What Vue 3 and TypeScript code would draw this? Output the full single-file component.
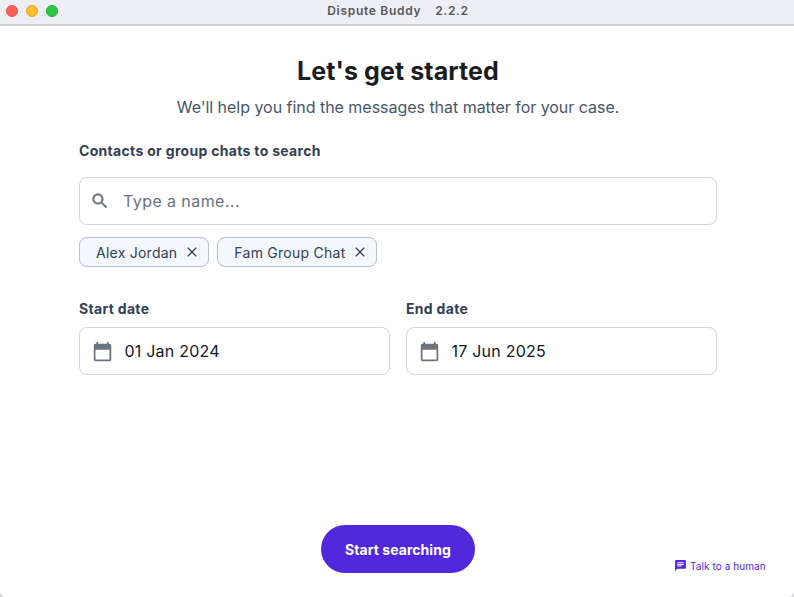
<script setup lang="ts">
const chips: string[] = ['Alex Jordan', 'Fam Group Chat']
const dates = [
  { label: 'Start date', value: '01 Jan 2024' },
  { label: 'End date', value: '17 Jun 2025' },
]
</script>

<template>
  <div class="window">
    <header class="titlebar">
      <div class="lights">
        <span class="light red"></span>
        <span class="light yellow"></span>
        <span class="light green"></span>
      </div>
      <span class="title">Dispute Buddy</span>
      <span class="title version">2.2.2</span>
    </header>
    <main class="content">
      <h1 class="heading">Let's get started</h1>
      <p class="sub">We'll help you find the messages that matter for your case.</p>
      <label class="label contacts">Contacts or group chats to search</label>
      <div class="field search">
        <svg class="search-icon" viewBox="0 0 24 24" width="20" height="20"><path fill="#6b7280" stroke="#6b7280" stroke-width="0.5" d="M15.5 14h-.79l-.28-.27A6.47 6.47 0 0 0 16 9.5 6.5 6.5 0 1 0 9.5 16c1.61 0 3.09-.59 4.23-1.57l.27.28v.79l5 4.99L20.49 19l-4.99-5zm-6 0C7.01 14 5 11.99 5 9.5S7.01 5 9.5 5 14 7.01 14 9.5 11.99 14 9.5 14z"/></svg>
        <span class="placeholder">Type a name...</span>
      </div>
      <div class="chips">
        <span v-for="chip in chips" :key="chip" class="chip">
          {{ chip }}
          <svg viewBox="0 0 24 24" width="16" height="16"><path fill="#374151" d="M19 6.41 17.59 5 12 10.59 6.41 5 5 6.41 10.59 12 5 17.59 6.41 19 12 13.41 17.59 19 19 17.59 13.41 12z"/></svg>
        </span>
      </div>
      <div class="dates">
        <div v-for="d in dates" :key="d.label" class="date">
          <label class="label">{{ d.label }}</label>
          <div class="field date-field">
            <svg viewBox="0 0 24 24" width="21" height="21"><path fill="#6b7280" d="M20 3h-1V1h-2v2H7V1H5v2H4c-1.1 0-2 .9-2 2v16c0 1.1.9 2 2 2h16c1.1 0 2-.9 2-2V5c0-1.1-.9-2-2-2zm0 18H4V10h16v11z"/></svg>
            <span class="date-value">{{ d.value }}</span>
          </div>
        </div>
      </div>
      <div class="spacer"></div>
      <button class="start">Start searching</button>
    </main>
    <a class="talk">
      <svg viewBox="0 0 24 24" width="13" height="13"><path fill="#5128dc" d="M20 2H4c-1.1 0-2 .9-2 2v18l4-4h14c1.1 0 2-.9 2-2V4c0-1.1-.9-2-2-2zM6 9h12v2H6V9zm8 5H6v-2h8v2zm4-6H6V6h12v2z"/></svg>
      Talk to a human
    </a>
  </div>
</template>

<style>
html, body { margin: 0; background: #d4d4da; overflow: hidden; }
</style>

<style scoped>
.window {
  position: relative;
  width: 794px;
  height: 597px;
  display: flex;
  flex-direction: column;
  font-family: Inter, "Liberation Sans", sans-serif;
  background: #fff;
  overflow: hidden;
  box-sizing: border-box;
  border-radius: 0 0 6px 6px;
}
.titlebar {
  position: relative;
  height: 26px;
  flex: none;
  box-sizing: border-box;
  padding-left: 2px;
  background: #eeeef5;
  border-bottom: 2px solid #cfcfd4;
  display: flex;
  align-items: center;
  justify-content: center;
  gap: 14px;
}
.lights { position: absolute; left: 6px; top: 5px; display: flex; gap: 8px; }
.light { width: 12px; height: 12px; border-radius: 50%; box-sizing: border-box; }
.red { background: #ff5f57; border: 1px solid #e5534b; }
.yellow { background: #febc2e; border: 1px solid #e0a128; }
.green { background: #28c840; border: 1px solid #1fae35; }
.title { font-size: 12px; font-weight: 600; color: #55555c; letter-spacing: 0.7px; margin-top: -4px; }
.content {
  flex: 1;
  display: flex;
  flex-direction: column;
  padding: 0 77px 24px 79px;
}
.heading {
  margin: 27px 0 0;
  height: 36px;
  line-height: 36px;
  text-align: center;
  font-size: 25px;
  font-weight: 700;
  letter-spacing: 0.1px;
  color: #1a1c1e;
}
.sub {
  margin: 5px 0 0;
  line-height: 26px;
  text-align: center;
  font-size: 16px;
  letter-spacing: -0.03px;
  color: #475569;
}
.label { display: block; font-size: 14px; font-weight: 700; letter-spacing: 0.31px; line-height: 20px; color: #334155; }
.contacts { margin-top: 21px; }
.field {
  display: flex;
  align-items: center;
  height: 48px;
  box-sizing: border-box;
  border: 1px solid #d1d5db;
  border-radius: 8px;
  background: #fff;
}
.search { margin-top: 16px; padding-left: 10px; }
.search-icon { flex: none; }
.placeholder { margin-left: 13px; font-size: 16px; color: #6b7280; letter-spacing: 0.42px; }
.chips { display: flex; gap: 8px; margin-top: 12px; }
.chip {
  display: flex;
  align-items: center;
  gap: 7px;
  height: 30px;
  box-sizing: border-box;
  padding: 0 8px 0 16px;
  background: #f4f7fb;
  border: 1px solid #b8bfc8;
  border-radius: 8px;
  font-size: 14px;
  letter-spacing: 0.25px;
  color: #334155;
}
.dates { display: flex; gap: 16px; margin-top: 32px; }
.date { flex: 1; }
.date-field { margin-top: 8px; padding-left: 11.5px; }
.date-value { margin-left: 12px; font-size: 16px; color: #111827; letter-spacing: 0.22px; }
.spacer { flex: 1; }
.start {
  align-self: center;
  width: 154px;
  height: 48px;
  border: none;
  border-radius: 24px;
  background: #5128dc;
  color: #fff;
  font-family: inherit;
  font-size: 14px;
  font-weight: 700;
  letter-spacing: 0.05px;
}
.talk {
  position: absolute;
  left: 674px;
  top: 559px;
  display: flex;
  align-items: center;
  gap: 3px;
  font-size: 10px;
  letter-spacing: 0.08px;
  color: #5128dc;
}
</style>
